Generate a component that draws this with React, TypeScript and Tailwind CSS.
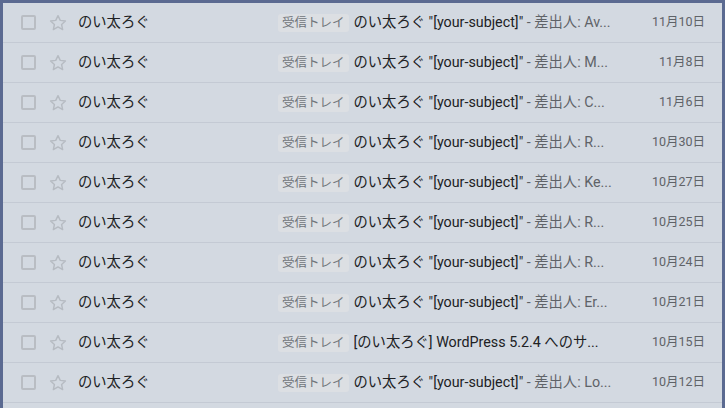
const rows = [
  { subject: 'のい太ろぐ "[your-subject]"', snippet: " - 差出人: Av...", date: "11月10日" },
  { subject: 'のい太ろぐ "[your-subject]"', snippet: " - 差出人: M...", date: "11月8日" },
  { subject: 'のい太ろぐ "[your-subject]"', snippet: " - 差出人: C...", date: "11月6日" },
  { subject: 'のい太ろぐ "[your-subject]"', snippet: " - 差出人: R...", date: "10月30日" },
  { subject: 'のい太ろぐ "[your-subject]"', snippet: " - 差出人: Ke...", date: "10月27日" },
  { subject: 'のい太ろぐ "[your-subject]"', snippet: " - 差出人: R...", date: "10月25日" },
  { subject: 'のい太ろぐ "[your-subject]"', snippet: " - 差出人: R...", date: "10月24日" },
  { subject: 'のい太ろぐ "[your-subject]"', snippet: " - 差出人: Er...", date: "10月21日" },
  { subject: "[のい太ろぐ] WordPress 5.2.4 へのサ...", snippet: "", date: "10月15日" },
  { subject: 'のい太ろぐ "[your-subject]"', snippet: " - 差出人: Lo...", date: "10月12日" },
];

function Star() {
  return (
    <svg width="20" height="20" viewBox="0 0 24 24" className="shrink-0">
      <path
        d="M12 3.2l2.7 5.7 6.2.7-4.6 4.2 1.3 6.1-5.6-3.2-5.6 3.2 1.3-6.1-4.6-4.2 6.2-.7z"
        fill="none"
        stroke="#b6bbc2"
        strokeWidth="1.7"
        strokeLinejoin="round"
      />
    </svg>
  );
}

export default function App() {
  return (
    <div
      className="w-[725px] h-[408px] overflow-hidden bg-[#d3d9e1] border-l-[3px] border-t-[3px] border-r-[3px] border-[#5b6a91]"
      style={{ fontFamily: "Roboto, 'Noto Sans CJK JP', sans-serif" }}
    >
      {rows.map((r, i) => (
        <div
          key={i}
          className="flex items-center h-[40px] border-b border-[#c4cad4] pl-[18px] pr-[17px]"
        >
          <div className="w-[15px] h-[15px] border-2 border-[#b9bdc3] rounded-[2px] shrink-0" />
          <div className="ml-[12px]">
            <Star />
          </div>
          <div className="ml-[10px] w-[200px] shrink-0 text-[14.3px] text-[#202124]">のい太ろぐ</div>
          <span className="shrink-0 bg-[#dcdfe3] text-[#70757a] text-[12.5px] leading-[18px] px-[4px] rounded-[3px]">
            受信トレイ
          </span>
          <div className="ml-[5px] flex-1 min-w-0 truncate text-[14.3px]">
            <span className="text-[#202124]">{r.subject}</span>
            <span className="text-[#5f6368]">{r.snippet}</span>
          </div>
          <div className="w-[93px] shrink-0 text-right text-[12.5px] text-[#5f6368]">{r.date}</div>
        </div>
      ))}
    </div>
  );
}
